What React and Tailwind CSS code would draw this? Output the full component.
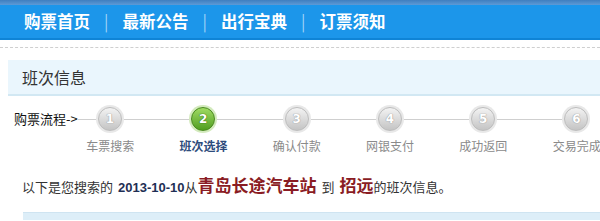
const font = { fontFamily: '"Noto Sans CJK SC", "Liberation Sans", sans-serif' };

const steps = [
  { n: "1", label: "车票搜索" },
  { n: "2", label: "班次选择", active: true },
  { n: "3", label: "确认付款" },
  { n: "4", label: "网银支付" },
  { n: "5", label: "成功返回" },
  { n: "6", label: "交易完成" },
];

function StepCircle({ n, active }) {
  return (
    <div
      className={`w-[28px] h-[28px] shrink-0 rounded-full p-[2px] ${
        active ? "bg-[#d3eabd]" : "bg-[#e8e8e8]"
      }`}
    >
      <div
        className={`w-full h-full rounded-full flex items-center justify-center text-[12px] font-bold text-white border ${
          active
            ? "bg-gradient-to-b from-[#a0db63] to-[#4f9e1d] border-[#4a8a20] [text-shadow:0_0_1px_#2f6a10,0_0_1px_#2f6a10]"
            : "bg-gradient-to-b from-[#f3f3f3] to-[#c4c4c4] border-[#bdbdbd] [text-shadow:0_0_1px_#999,0_0_1px_#999]"
        }`}
        style={{ fontFamily: '"DejaVu Sans", sans-serif' }}
      >
        {n}
      </div>
    </div>
  );
}

export default function App() {
  return (
    <div className="w-[600px] h-[221px] bg-white overflow-hidden" style={font}>
      {/* top nav */}
      <div className="h-[5px] bg-gradient-to-b from-[#3f7fbf] to-[#5d9ad6]" />
      <div className="h-[35px] bg-[#1c96ea] border-b-2 border-[#0f84d6] flex items-center pl-[24px] text-white font-bold text-[16.5px]">
        <span>购票首页</span>
        <span className="mx-[14px] font-normal text-[#9fd3f7]">|</span>
        <span>最新公告</span>
        <span className="mx-[14px] font-normal text-[#9fd3f7]">|</span>
        <span>出行宝典</span>
        <span className="mx-[14px] font-normal text-[#9fd3f7]">|</span>
        <span>订票须知</span>
      </div>

      <div className="mt-[7px] border-t border-dashed border-[#cfcfcf]" />

      {/* panel header */}
      <div className="ml-[8px] mt-[12px] h-[36px] bg-[#eaf6fd] border-b-2 border-[#d2e8f3] flex items-center pl-[14px] text-[16px] text-[#333]">
        班次信息
      </div>

      {/* steps */}
      <div className="mt-[9px] flex items-center pl-[14px] h-[28px]">
        <span className="w-[64px] shrink-0 text-[13px] text-[#111] whitespace-nowrap">购票流程-&gt;</span>
        <div className="w-[18px] h-px bg-[#cfcfcf]" />
        {steps.map((s, i) => (
          <div key={s.n} className="flex items-center">
            {i > 0 && <div className="w-[65.3px] h-px bg-[#cfcfcf]" />}
            <StepCircle n={s.n} active={s.active} />
          </div>
        ))}
      </div>
      <div className="flex ml-[63.5px] mt-[4px]">
        {steps.map((s) => (
          <div
            key={s.n}
            className={`w-[93.3px] shrink-0 text-center text-[12px] ${
              s.active ? "font-bold text-[#2d4c7c]" : "text-[#8a8a8a]"
            }`}
          >
            {s.label}
          </div>
        ))}
      </div>

      {/* result line */}
      <div className="mt-[17px] pl-[22px] flex items-baseline text-[13px] text-[#333] whitespace-nowrap">
        <span>以下是您搜索的</span>
        <span className="ml-[5px] font-bold text-[13px] text-[#1f2f55]" style={{ fontFamily: '"Liberation Sans", sans-serif' }}>
          2013-10-10
        </span>
        <span>从</span>
        <span className="font-bold text-[17px] text-[#8a1c24]">青岛长途汽车站</span>
        <span className="mx-[5px]">到</span>
        <span className="font-bold text-[17px] text-[#8a1c24]">招远</span>
        <span>的班次信息。</span>
      </div>

      <div className="ml-[23px] mt-[14px] h-[8px] bg-[#ddeef8] border-t border-[#cfe4f1]" />
    </div>
  );
}
